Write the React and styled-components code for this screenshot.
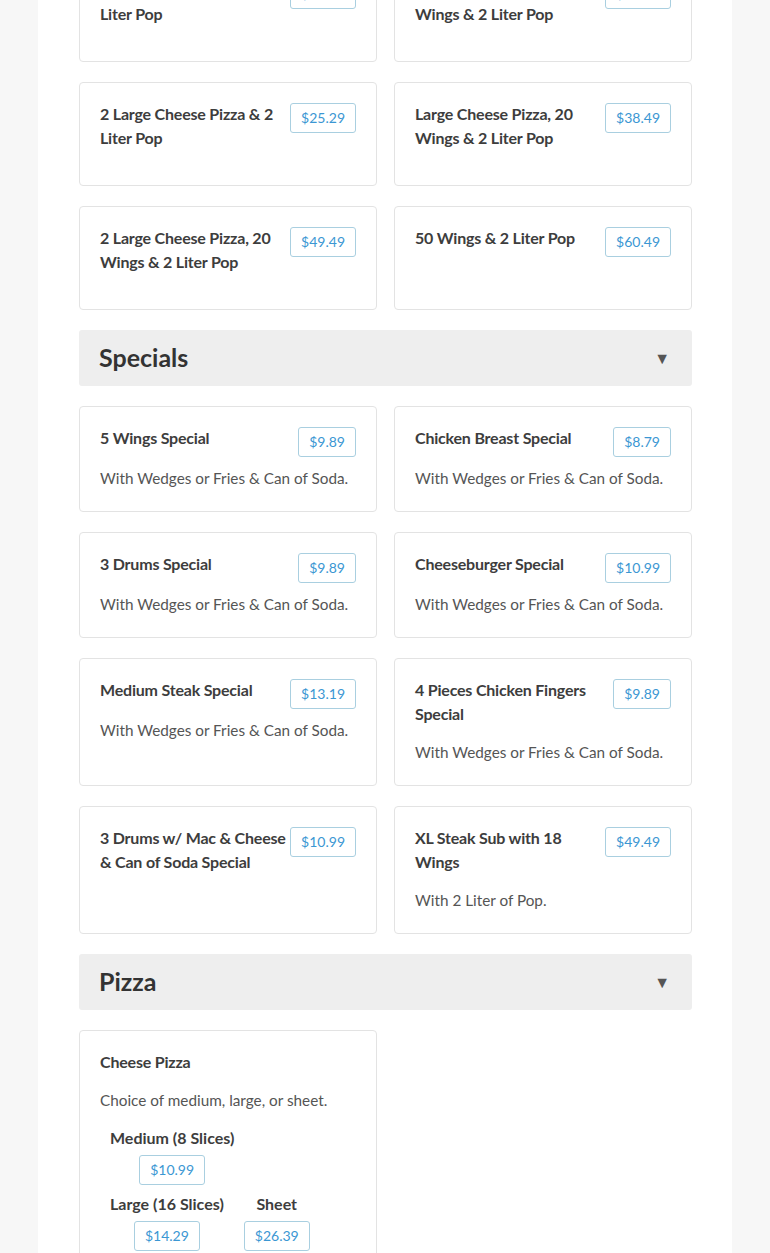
import React from "react";
import styled, { createGlobalStyle } from "styled-components";

const Global = createGlobalStyle`
  html, body { margin: 0; padding: 0; background: #f7f7f7; }
  body { font-family: Lato, "Open Sans", sans-serif; color: #3b3b3b; }
  * { box-sizing: border-box; }
`;

const Page = styled.main`
  width: 694px;
  margin: -42px auto 0;
  background: #ffffff;
  padding: 0 40px 40px 41px;
  display: flex;
  flex-direction: column;
  gap: 20px;
`;

const Section = styled.section`
  display: flex;
  flex-direction: column;
  gap: 20px;
`;

const SectionHeader = styled.header`
  height: 56px;
  background: #eeeeee;
  border-radius: 3px;
  display: flex;
  align-items: center;
  justify-content: space-between;
  padding: 0 22px 3px 20px;
`;

const SectionTitle = styled.h2`
  margin: 0;
  font-size: 25px;
  line-height: 30px;
  font-weight: 700;
  color: #333;
`;

const Caret = styled.span`
  font-size: 16px;
  color: #555;
  line-height: 1;
  padding-top: 3px;
`;

const Grid = styled.div`
  display: grid;
  grid-template-columns: 1fr 1fr;
  column-gap: 17px;
  row-gap: 20px;
`;

const Card = styled.article`
  border: 1px solid #e3e3e3;
  border-radius: 4px;
  background: #fff;
  padding: 20px;
`;

const CardHead = styled.div`
  display: flex;
  align-items: flex-start;
`;

const ItemName = styled.h3`
  flex: 1;
  margin: -1px 0 15px;
  font-size: 16px;
  line-height: 24px;
  font-weight: 700;
  letter-spacing: -0.2px;
  color: #3d3d3d;
`;

const Price = styled.span`
  display: inline-block;
  flex: none;
  margin: 0 0 ${(p) => (p.$inline ? 0 : 10)}px ${(p) => (p.$inline ? 0 : 1)}px;
  padding: 4px 10px;
  font-size: 14px;
  line-height: 20px;
  color: #3b97d3;
  border: 1px solid #a9cfe0;
  border-radius: 3px;
  background: #fff;
`;

const Desc = styled.p`
  margin: 0 0 2px;
  font-size: 15.3px;
  line-height: 22px;
  color: #555;
`;

const Options = styled.div`
  display: flex;
  flex-wrap: wrap;
  margin-top: 15px;
`;

const Option = styled.div`
  margin: 0 10px 7px;
  display: flex;
  flex-direction: column;
  align-items: center;
  gap: 5px;
`;

const OptionName = styled.span`
  font-size: 16px;
  line-height: 24px;
  font-weight: 700;
  color: #3d3d3d;
`;

const sections = [
  {
    title: null,
    items: [
      { name: "Large Cheese Pizza & 2 Liter Pop", price: "$19.79" },
      { name: "Medium Cheese Pizza, 10 Wings & 2 Liter Pop", price: "$29.99" },
      { name: "2 Large Cheese Pizza & 2 Liter Pop", price: "$25.29" },
      { name: "Large Cheese Pizza, 20 Wings & 2 Liter Pop", price: "$38.49" },
      { name: "2 Large Cheese Pizza, 20 Wings & 2 Liter Pop", price: "$49.49" },
      { name: "50 Wings & 2 Liter Pop", price: "$60.49" },
    ],
  },
  {
    title: "Specials",
    items: [
      { name: "5 Wings Special", price: "$9.89", desc: "With Wedges or Fries & Can of Soda." },
      { name: "Chicken Breast Special", price: "$8.79", desc: "With Wedges or Fries & Can of Soda." },
      { name: "3 Drums Special", price: "$9.89", desc: "With Wedges or Fries & Can of Soda." },
      { name: "Cheeseburger Special", price: "$10.99", desc: "With Wedges or Fries & Can of Soda." },
      { name: "Medium Steak Special", price: "$13.19", desc: "With Wedges or Fries & Can of Soda." },
      { name: "4 Pieces Chicken Fingers Special", price: "$9.89", desc: "With Wedges or Fries & Can of Soda." },
      { name: "3 Drums w/ Mac & Cheese & Can of Soda Special", price: "$10.99" },
      { name: "XL Steak Sub with 18 Wings", price: "$49.49", desc: "With 2 Liter of Pop." },
    ],
  },
  {
    title: "Pizza",
    items: [
      {
        name: "Cheese Pizza",
        desc: "Choice of medium, large, or sheet.",
        options: [
          { label: "Medium (8 Slices)", price: "$10.99" },
          { label: "Large (16 Slices)", price: "$14.29" },
          { label: "Sheet", price: "$26.39" },
        ],
      },
    ],
  },
];

function MenuCard({ item }) {
  return (
    <Card>
      <CardHead>
        <ItemName>{item.name}</ItemName>
        {item.price && <Price>{item.price}</Price>}
      </CardHead>
      {item.desc && <Desc>{item.desc}</Desc>}
      {item.options && (
        <Options>
          {item.options.map((o) => (
            <Option key={o.label}>
              <OptionName>{o.label}</OptionName>
              <Price $inline>{o.price}</Price>
            </Option>
          ))}
        </Options>
      )}
    </Card>
  );
}

export default function App() {
  return (
    <>
      <Global />
      <Page>
        {sections.map((s, i) => (
          <Section key={i}>
            {s.title && (
              <SectionHeader>
                <SectionTitle>{s.title}</SectionTitle>
                <Caret>▼</Caret>
              </SectionHeader>
            )}
            <Grid>
              {s.items.map((it) => (
                <MenuCard key={it.name} item={it} />
              ))}
            </Grid>
          </Section>
        ))}
      </Page>
    </>
  );
}
